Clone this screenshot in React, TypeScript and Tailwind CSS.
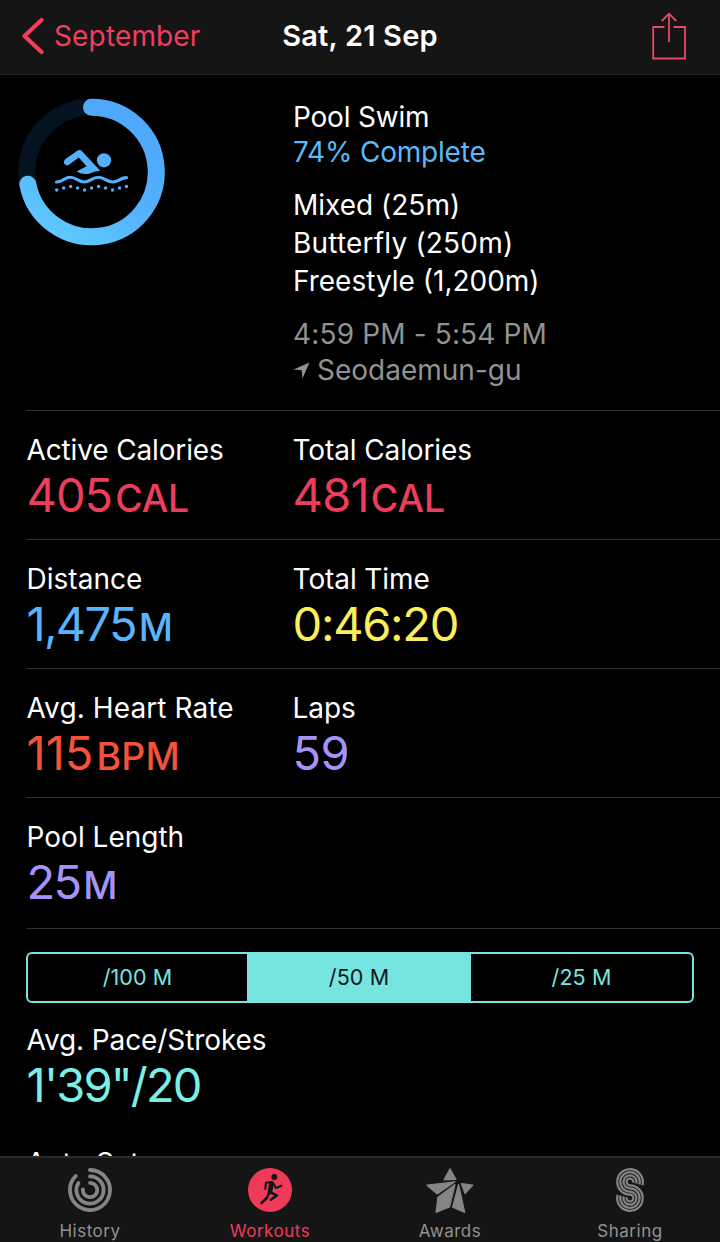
import React from 'react';

interface Metric {
  label: string;
  labelTracking?: string;
  value: string;
  tracking: string;
  unit?: string;
  unitClass?: string;
  color: string;
}

const METRIC_ROWS: Metric[][] = [
  [
    { label: 'Active Calories', labelTracking: 'tracking-[-0.15px]', value: '405', unit: 'CAL', color: 'text-[#ec3d5c]', tracking: 'tracking-[-1px]', unitClass: 'ml-[3px] tracking-[-0.2px]' },
    { label: 'Total Calories', labelTracking: 'tracking-[-0.12px]', value: '481', unit: 'CAL', color: 'text-[#ec3d5c]', tracking: 'tracking-[-0.8px]', unitClass: 'ml-[2px] tracking-[0px]' },
  ],
  [
    { label: 'Distance', value: '1,475', unit: 'M', color: 'text-[#58b4fb]', tracking: 'tracking-[-1.7px]', unitClass: 'ml-[3px]' },
    { label: 'Total Time', labelTracking: 'tracking-[-0.1px]', value: '0:46:20', color: 'text-[#fbee5a]', tracking: 'tracking-[-1.3px]' },
  ],
  [
    { label: 'Avg. Heart Rate', labelTracking: 'tracking-[0.1px]', value: '115', unit: 'BPM', color: 'text-[#f5523a]', tracking: 'tracking-[0px]', unitClass: 'ml-[3px] tracking-[0.2px]' },
    { label: 'Laps', labelTracking: 'tracking-[-0.1px]', value: '59', color: 'text-[#a594f8]', tracking: 'tracking-[-0.6px]' },
  ],
  [{ label: 'Pool Length', value: '25', unit: 'M', color: 'text-[#a594f8]', tracking: 'tracking-[-1.8px]', unitClass: 'ml-[3px]' }],
];

const PACE: Metric = {
  label: 'Avg. Pace/Strokes',
  labelTracking: 'tracking-[-0.1px]',
  value: '1\'39"/20',
  color: 'text-[#7ceee8]',
  tracking: 'tracking-[-1.8px]',
};

const SPLITS = ['/100 M', '/50 M', '/25 M'];

const ProgressRing = () => (
  <svg width="148" height="148" viewBox="17 98 148 148" fill="none">
    <defs>
      <linearGradient id="ring" gradientUnits="userSpaceOnUse" x1="120" y1="110" x2="45" y2="235">
        <stop offset="0" stopColor="#4fa8fb" />
        <stop offset="0.5" stopColor="#53b1fc" />
        <stop offset="1" stopColor="#5fcbfd" />
      </linearGradient>
    </defs>
    <circle cx="91.5" cy="172" r="64.8" stroke="#04131f" strokeWidth="17" />
    <path d="M91.5 107.2A64.8 64.8 0 1 1 27.8 184.2" stroke="url(#ring)" strokeWidth="17" strokeLinecap="round" />
    {/* swimmer */}
    <g fill="#54b0fa">
      <circle cx="104" cy="160.3" r="7.1" />
      <path d="M78 150.3Q80 149.4 81.7 151L100.3 170.7Q95 171 90.5 173.2Q83.5 175.5 76.5 171.5L86.5 166.2L78.8 157.6L69 164.8Q65.5 166.3 64.1 163.5Q63.3 160.7 65.8 158.8Z" />
    </g>
    <path
      d="M56.5 182C63 182 64.5 177.3 70.3 177.3S78.5 182 84.3 182S92.5 177.3 98.4 177.3S106.6 182 112.5 182S120.5 177.6 126.5 177.6"
      stroke="#54b0fa"
      strokeWidth="3.1"
      strokeLinecap="round"
    />
    <g fill="#54b0fa">
      {[190, 188, 186.5, 188, 190, 188, 186.5, 188, 190, 188, 186.5].map((y, i) => (
        <circle key={i} cx={56.7 + i * 6.98} cy={y} r="1.7" />
      ))}
    </g>
  </svg>
);

const HistoryIcon = () => (
  <svg width="44" height="44" viewBox="-22 -22 44 44" fill="none" stroke="#858585" strokeWidth="3.8" strokeLinecap="round">
    <path d="M0 -20A20 20 0 1 1 -14.3 -14" />
    <path d="M0 -13.6A13.6 13.6 0 1 1 -11.6 -7.1" />
    <path d="M0 -7.2A7.2 7.2 0 1 1 -7.15 -0.6" />
  </svg>
);

const WorkoutsIcon = () => (
  <svg width="44" height="44" viewBox="-22 -22 44 44" fill="none">
    <circle r="22" fill="#f03a5a" />
    <circle cx="4.3" cy="-13" r="2.9" fill="#151515" />
    <g stroke="#151515" strokeLinecap="round" strokeLinejoin="round">
      <path d="M1.5 -6.8L0 2" strokeWidth="4.6" />
      <path d="M1.5 -8L-4 -7.2L-4.7 -1" strokeWidth="2.1" />
      <path d="M3 -7L6 -2L11.3 -4.3" strokeWidth="2.1" />
      <path d="M0.5 2.5L6.8 5.4L0.8 9.8" strokeWidth="2.6" />
      <path d="M-1 3L-3 7.8L-8.5 13" strokeWidth="2.6" />
    </g>
  </svg>
);

const AwardsIcon = () => (
  <svg width="50" height="48" viewBox="-25 -24 50 48" fill="#858585" stroke="#858585" strokeWidth="1.2" strokeLinejoin="round">
    <path d="M0 -21.2L5.9 -10.7L-6 -10.2Z" />
    <path d="M-23 -4.8L5 -8.2L-12.8 4Z" />
    <path d="M11.4 -6.4L22.8 -5L15 3.5Z" />
    <path d="M5 -5.5L-0.5 17L-14 22.5L-12.1 7.3Z" />
    <path d="M8.6 -5.5L14.7 22.5L2.5 17.3Z" />
  </svg>
);

const SharingIcon = () => (
  <svg width="32" height="46" viewBox="-16 -23 32 46" fill="none" stroke="#858585" strokeWidth="2.2">
    {[12.8, 9.7, 6.5, 3.4].map((r) => {
      const s = 16.2 - r;
      return (
        <path
          key={r}
          d={`M${r * 0.97} ${-8.1 + r * 0.26}A${r} ${r} 0 1 0 0 ${-8.1 + r}A${s} ${s} 0 1 1 ${-s * 0.97} ${8.1 - s * 0.26}`}
        />
      );
    })}
  </svg>
);

const TABS = [
  { name: 'History', icon: <HistoryIcon />, color: 'text-[#929292]' },
  { name: 'Workouts', icon: <WorkoutsIcon />, color: 'text-[#f03a5a]' },
  { name: 'Awards', icon: <AwardsIcon />, color: 'text-[#929292]' },
  { name: 'Sharing', icon: <SharingIcon />, color: 'text-[#929292]' },
];

const MetricCell: React.FC<{ metric: Metric }> = ({ metric }) => (
  <div className="whitespace-nowrap">
    <div className={`text-[28px] leading-[35px] text-white ${metric.labelTracking ?? ''}`}>{metric.label}</div>
    <div className={`text-[47px] leading-[53px] ${metric.color} ${metric.tracking}`}>
      {metric.value}
      {metric.unit && <span className={`text-[37.5px] font-medium leading-none ${metric.unitClass ?? ''}`}>{metric.unit}</span>}
    </div>
  </div>
);

const App: React.FC = () => {
  return (
    <div className="flex h-[1242px] w-[720px] flex-col overflow-hidden bg-black font-['Inter',sans-serif] text-[28px] text-white">
      <header className="grid h-[75px] shrink-0 grid-cols-3 items-start border-b border-[#222222] bg-[#151515] leading-[36px]">
        <div className="flex items-start pl-[21px] pt-[18px] text-[#f03e5e]">
          <svg width="24" height="38" viewBox="0 0 24 38" fill="none" className="mr-[9px] shrink-0">
            <path d="M20.5 2L3.5 18L20.5 34" stroke="currentColor" strokeWidth="4.2" strokeLinecap="round" strokeLinejoin="round" />
          </svg>
          <span className="tracking-[0.15px]">September</span>
        </div>
        <h1 className="pt-[18px] text-center text-[29px] font-semibold tracking-[0.2px]">Sat, 21 Sep</h1>
        <div className="flex justify-end pr-[33px] pt-[12px]">
          <svg width="36" height="48" viewBox="0 0 36 48" fill="none" stroke="#e84a64" strokeWidth="1.8">
            <path d="M13.5 15H2.2V46.5H34V15H22.5M18 30V2M10.7 9L18 1.7L25.3 9" />
          </svg>
        </div>
      </header>

      <main className="h-[1081px] overflow-hidden">
        <section className="flex h-[335px]">
          <div className="w-[293px] shrink-0 pl-[17px] pt-[23px]">
            <ProgressRing />
          </div>
          <div className="whitespace-nowrap pt-[25px]">
            <div className="leading-[34px] tracking-[-0.2px]">Pool Swim</div>
            <div className="leading-[37px] tracking-[-0.2px] text-[#5ab9f8]">74% Complete</div>
            <div className="mt-[15px] leading-[38px]">
              <p>Mixed (25m)</p>
              <p className="tracking-[0.2px]">Butterfly (250m)</p>
              <p>Freestyle (1,200m)</p>
            </div>
            <div className="mt-[16px] leading-[36px] text-[#929294]">
              <p className="tracking-[0.15px]">4:59 PM - 5:54 PM</p>
              <p className="flex items-center">
                <svg width="17" height="17" viewBox="0 0 17 17" className="mr-[7px]">
                  <path d="M16.5 0.5L9.5 16.5L8.7 8.3L0.5 7.5Z" fill="currentColor" />
                </svg>
                Seodaemun-gu
              </p>
            </div>
          </div>
        </section>

        <div className="pl-[26px]">
          {METRIC_ROWS.map((row, i) => (
            <section
              key={i}
              className={`grid grid-cols-[266px_1fr] border-t border-[#303030] pl-[0.6px] pt-[22px] ${i === 3 ? 'h-[131px]' : 'h-[129px]'}`}
            >
              {row.map((metric) => (
                <MetricCell key={metric.label} metric={metric} />
              ))}
            </section>
          ))}
          <div className="border-t border-[#303030]" />
        </div>

        <div className="mx-[26px] mt-[23px] grid h-[51px] grid-cols-[219px_224px_1fr] overflow-hidden rounded-md border-2 border-[#76e5e1] text-[21.5px] leading-[47px] tracking-[0.1px]">
          {SPLITS.map((split) => (
            <button key={split} className={split === '/50 M' ? 'bg-[#76e5e1] text-[#0a1a1a]' : 'text-[#76e5e1]'}>
              {split}
            </button>
          ))}
        </div>

        <div className="pl-[26.6px] pt-[20px]">
          <MetricCell metric={PACE} />
          <div className="mt-[35px] leading-[35px]">Auto Sets</div>
        </div>
      </main>

      <nav className="grid h-[86px] shrink-0 grid-cols-4 border-t-2 border-[#2c2c2c] bg-[#151515]">
        {TABS.map((tab) => (
          <button key={tab.name} className={`flex flex-col items-center pt-[9px] ${tab.color}`}>
            <span className="flex h-[46px] items-center justify-center">{tab.icon}</span>
            <span className="mt-[7px] text-[17px] leading-[22px] tracking-[0.5px]">{tab.name}</span>
          </button>
        ))}
      </nav>
    </div>
  );
};

export default App;
